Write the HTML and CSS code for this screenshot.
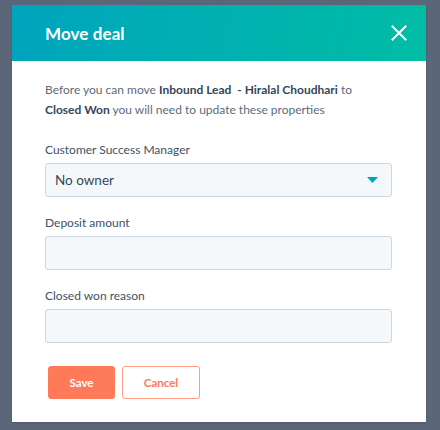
FILE: index.html
```html
<!DOCTYPE html>
<html>
<head>
<meta charset="utf-8">
<link rel="stylesheet" href="styles.css">
</head>
<body>
<div class="modal">
  <div class="modal-header">
    <h1 class="modal-title">Move deal</h1>
    <span class="close" aria-label="Close">
      <svg width="16" height="16" viewBox="0 0 16 16"><path d="M1.5 1.5 L14.5 14.5 M14.5 1.5 L1.5 14.5" stroke="#fff" stroke-width="2" fill="none" stroke-linecap="square"/></svg>
    </span>
  </div>
  <div class="modal-body">
    <p class="intro">Before you can move <b>Inbound Lead&nbsp; - Hiralal Choudhari</b> to <b>Closed Won</b> you will need to update these properties</p>
    <div class="field">
      <label class="label">Customer Success Manager</label>
      <div class="control select">
        <span>No owner</span>
        <svg class="caret" width="11" height="6" viewBox="0 0 11 6"><path d="M0 0 H11 L5.5 6 Z" fill="#00a4bd"/></svg>
      </div>
    </div>
    <div class="field">
      <label class="label">Deposit amount</label>
      <div class="control"></div>
    </div>
    <div class="field">
      <label class="label">Closed won reason</label>
      <div class="control"></div>
    </div>
    <div class="actions">
      <button class="btn btn-primary">Save</button>
      <button class="btn btn-secondary">Cancel</button>
    </div>
  </div>
</div>
</body>
</html>
```

FILE: styles.css
```css
html, body {
  margin: 0;
  padding: 0;
}
body {
  background: #5b6778;
  width: 440px;
  height: 430px;
  overflow: hidden;
  padding-top: 5px;
  box-sizing: border-box;
  font-family: Lato, "Open Sans", sans-serif;
  color: #33475b;
}
.modal {
  margin-left: 12px;
  width: 414px;
  height: 417px;
  background: #fff;
  box-shadow: 0 1px 2px rgba(0,0,0,0.15);
}
.modal-header {
  height: 56px;
  background: linear-gradient(100deg, #00a4bd 0%, #00bda5 100%);
  display: flex;
  align-items: center;
  justify-content: space-between;
  padding: 0 19px 0 33px;
}
.modal-title {
  margin: 0;
  color: #fff;
  font-size: 17px;
  font-weight: 700;
  letter-spacing: 0.1px;
}
.close {
  display: flex;
  width: 16px;
  height: 16px;
}
.modal-body {
  padding: 19px 34px 0 33px;
}
.intro {
  margin: 0 0 20px;
  max-width: 320px;
  font-size: 12px;
  line-height: 20px;
  color: #5c6b7c;
}
.intro b {
  color: #33475b;
  font-weight: 700;
}
.field {
  margin-bottom: 16px;
}
.label {
  display: block;
  font-size: 12px;
  line-height: 20px;
  color: #3e5166;
  margin-bottom: 3px;
}
.control {
  height: 34px;
  box-sizing: border-box;
  background: #f5f8fa;
  border: 1px solid #cbd6e2;
  border-radius: 3px;
}
.select {
  display: flex;
  align-items: center;
  justify-content: space-between;
  padding: 0 13px 0 9px;
  font-size: 13.5px;
  color: #33475b;
}
.actions {
  display: flex;
  gap: 7px;
  padding: 7px 0 0 3px;
}
.btn {
  height: 33px;
  box-sizing: border-box;
  border-radius: 3px;
  font-family: inherit;
  font-size: 11.5px;
  font-weight: 700;
  cursor: pointer;
}
.btn-primary {
  width: 67px;
  background: #ff7a59;
  border: 1px solid #ff7a59;
  color: #fff;
}
.btn-secondary {
  width: 78px;
  background: #fff;
  border: 1px solid #ff9c82;
  color: #ff7a59;
}
```
